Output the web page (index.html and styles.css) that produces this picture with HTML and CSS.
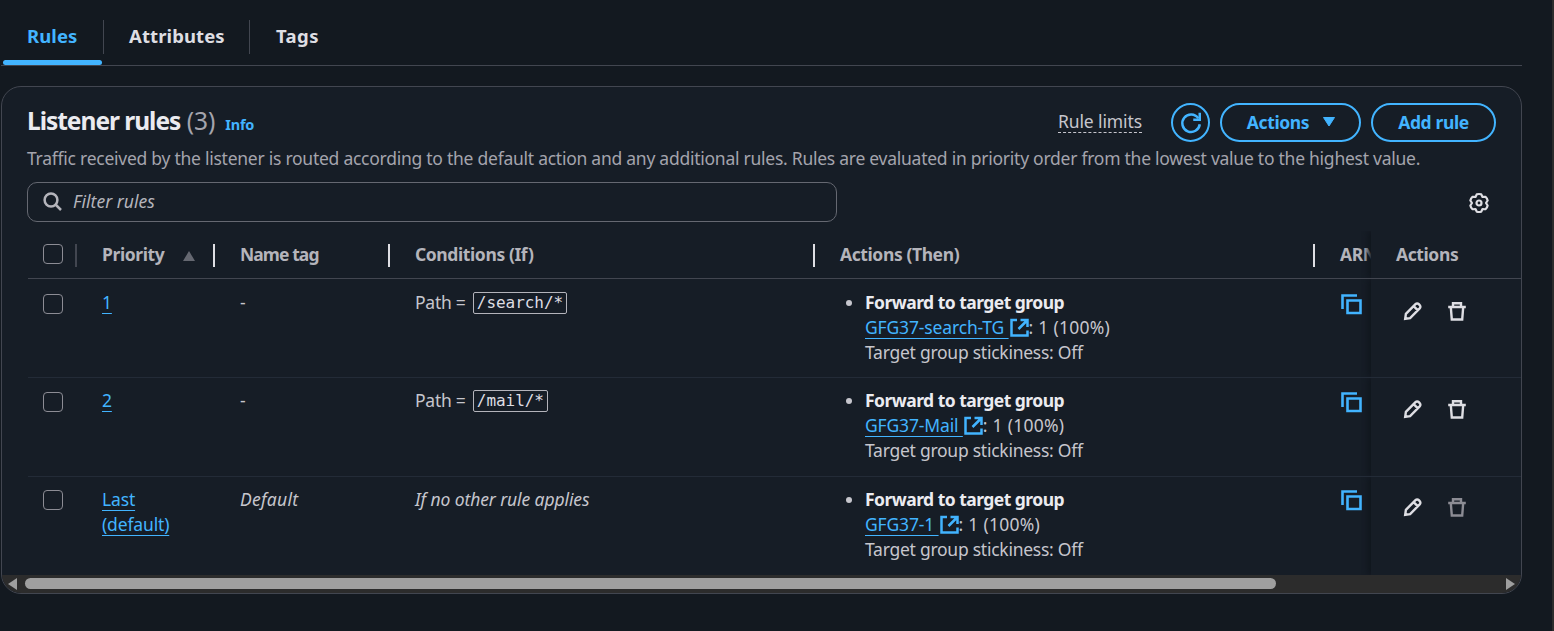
FILE: index.html
```html
<!DOCTYPE html>
<html lang="en">
<head>
<meta charset="utf-8">
<title>Listener rules</title>
<link rel="stylesheet" href="styles.css">
</head>
<body>
<svg class="defs" width="0" height="0">
  <symbol id="i-external" viewBox="0 0 21 21"><path d="M11.500 3h7v7M9.500 12l9-9M18.500 13.500v5h-16V3H8"/></symbol>
  <symbol id="i-copy" viewBox="0 0 21 21"><path d="M16 1.500H1.500V15"/><path d="M6.500 6.500h13v12.500h-13z"/></symbol>
  <symbol id="i-edit" viewBox="0 0 20 20"><path d="M2.200 17.800l.7-4.900L12.500 3.200a2.300 2.300 0 0 1 3.300 0l.9.9a2.300 2.300 0 0 1 0 3.300L7.100 17.100zM10.700 5.200l4.100 4.100"/></symbol>
  <symbol id="i-trash" viewBox="0 0 20 20"><path d="M1.200 6h17.600M6 6V2.200h8V6M3.800 6l1 12.500h10.400l1-12.500"/></symbol>
</svg>
<nav class="tabs">
  <a class="tab active">Rules</a>
  <a class="tab">Attributes</a>
  <a class="tab">Tags</a>
</nav>
<main class="card">
  <header class="head">
    <h2 class="title">Listener rules <span class="count">(3)</span></h2>
    <a class="info">Info</a>
    <span class="limits">Rule limits</span>
    <button class="btn round"><svg width="20" height="20" viewBox="0 0 16 16"><path d="M9.800 5.400H15V-.3"/><path d="M15 9a7 7 0 1 1-1.200-4.800"/></svg></button>
    <button class="btn actions">Actions<svg class="caret" width="14" height="12" viewBox="0 0 14 12"><path d="M1.500 1.500h11L7 10z"/></svg></button>
    <button class="btn add">Add rule</button>
  </header>
  <p class="desc">Traffic received by the listener is routed according to the default action and any additional rules. Rules are evaluated in priority order from the lowest value to the highest value.</p>
  <div class="tools">
    <div class="filter"><svg width="20" height="20" viewBox="0 0 20 20"><circle cx="8" cy="8" r="6.400"/><path d="m12.500 12.500 5.500 5.500"/></svg><em>Filter rules</em></div>
    <svg class="gear" width="22" height="22" viewBox="0 0 22 22"><path d="M8.800 2.300 Q11 1.700 13.200 2.300L14.500 4.900 17.500 4.750Q19.200 6.300 19.650 8.500L18 11 19.650 13.500Q19.200 15.700 17.500 17.250L14.500 17.100 13.200 19.700Q11 20.300 8.800 19.700L7.500 17.100 4.500 17.250Q2.800 15.700 2.350 13.500L4 11 2.350 8.500Q2.800 6.300 4.500 4.750L7.500 4.900z"/><circle cx="11" cy="11" r="2.500"/></svg>
  </div>
  <div class="table">
    <div class="row thead">
      <div class="c pick"><i class="box"></i></div>
      <div class="c">Priority<svg class="sort" width="14" height="12" viewBox="0 0 14 12"><path d="M1 11h12L7 1z"/></svg></div>
      <div class="c tag">Name tag</div>
      <div class="c">Conditions (If)</div>
      <div class="c">Actions (Then)</div>
      <div class="c arn">ARN</div>
      <div class="c sticky">Actions</div>
    </div>
    <div class="row">
      <div class="c pick"><i class="box"></i></div>
      <div class="c"><a class="link">1</a></div>
      <div class="c">-</div>
      <div class="c">Path = <code>/search/*</code></div>
      <div class="c"><ul><li><b>Forward to target group</b><br><a class="link">GFG37-search-TG&nbsp;</a><svg class="ext"><use href="#i-external"/></svg><span class="share">: 1 (100%)</span><br>Target group stickiness: Off</li></ul></div>
      <div class="c arn"><svg class="copy"><use href="#i-copy"/></svg></div>
      <div class="c sticky ops"><svg><use href="#i-edit"/></svg><svg><use href="#i-trash"/></svg></div>
    </div>
    <div class="row second">
      <div class="c pick"><i class="box"></i></div>
      <div class="c"><a class="link">2</a></div>
      <div class="c">-</div>
      <div class="c">Path = <code>/mail/*</code></div>
      <div class="c"><ul><li><b>Forward to target group</b><br><a class="link">GFG37-Mail&nbsp;</a><svg class="ext"><use href="#i-external"/></svg><span class="share">: 1 (100%)</span><br>Target group stickiness: Off</li></ul></div>
      <div class="c arn"><svg class="copy"><use href="#i-copy"/></svg></div>
      <div class="c sticky ops"><svg><use href="#i-edit"/></svg><svg><use href="#i-trash"/></svg></div>
    </div>
    <div class="row last">
      <div class="c pick"><i class="box"></i></div>
      <div class="c"><a class="link">Last<br>(default)</a></div>
      <div class="c"><em class="wide">Default</em></div>
      <div class="c"><em>If no other rule applies</em></div>
      <div class="c"><ul><li><b>Forward to target group</b><br><a class="link">GFG37-1&nbsp;</a><svg class="ext"><use href="#i-external"/></svg><span class="share">: 1 (100%)</span><br>Target group stickiness: Off</li></ul></div>
      <div class="c arn"><svg class="copy"><use href="#i-copy"/></svg></div>
      <div class="c sticky ops"><svg><use href="#i-edit"/></svg><svg class="off"><use href="#i-trash"/></svg></div>
    </div>
  </div>
  <div class="scroll"><i class="arrow left"></i><div class="track"><div class="thumb"></div></div><i class="arrow right"></i></div>
</main>
</body>
</html>
```

FILE: styles.css
```css
* { box-sizing: border-box; }
body {
  margin: 0;
  height: 631px;
  padding: 0 30px 0 1px;
  overflow: hidden;
  background: #131920;
  border-right: 2px solid #2c2c2c;
  color: #c6c6cd;
  font: 17.5px/25px "Noto Sans", "Open Sans", sans-serif;
  letter-spacing: -0.256px;
}
svg { fill: none; stroke: currentColor; stroke-width: 2; flex: none; overflow: visible; }
em { letter-spacing: -0.1px; }
.wide { letter-spacing: 0.3px; }
.defs { position: absolute; }
.tabs { display: flex; height: 66px; border-bottom: 1px solid #424650; padding-left: 2px; }
.tab {
  position: relative;
  height: 65px;
  padding: 23px 24px 0;
  font-size: 18.5px;
  font-weight: 700;
  letter-spacing: 0.1px;
  color: #dedee3;
}
.tab + .tab::before {
  content: "";
  position: absolute;
  left: 0; top: 20px;
  width: 1px; height: 34px;
  background: #424650;
}
.tab.active { width: 100px; color: #42b4ff; }
.tab.active::after {
  content: "";
  position: absolute;
  left: 0; bottom: 0;
  width: 99px; height: 5px;
  border-radius: 5px;
  background: #42b4ff;
}
.tab:nth-child(2) { width: 146px; padding-left: 26px; }
.tab:nth-child(3) { padding-left: 27px; letter-spacing: 0.4px; }
.card {
  width: 1521px;
  height: 508px;
  margin-top: 20px;
  border: 1px solid #424650;
  border-radius: 20px;
  overflow: hidden;
  background: #161d26;
}
.head { display: flex; align-items: center; height: 39px; margin: 16px 25px 0; }
.title { margin: -4px 0 0; font-size: 24.5px; font-weight: 700; letter-spacing: -1.02px; color: #ebebf0; white-space: nowrap; }
.count { font-weight: 400; letter-spacing: 0; color: #a4a4ad; margin-left: 1px; }
.info { margin: 4px 0 0 10px; font-size: 14.5px; font-weight: 700; color: #42b4ff; }
.limits { margin: -2px 29px 0 auto; line-height: 22px; border-bottom: 1px dashed #c6c6cd; letter-spacing: -0.11px; }
.btn {
  display: flex;
  align-items: center;
  justify-content: center;
  height: 39px;
  padding: 0 0 1px;
  border: 2px solid #42b4ff;
  border-radius: 20px;
  background: transparent;
  color: #42b4ff;
  font: inherit;
  font-weight: 700;
  letter-spacing: -0.38px;
}
.round { width: 39px; padding: 1px 0 0 1px; }
.actions { width: 141px; margin-left: 10px; padding-left: 2px; gap: 13px; }
.caret { fill: currentColor; stroke-width: 1; stroke-linejoin: round; }
.add { width: 125px; margin-left: 10px; }
.desc { margin: 4px 25px 11px; white-space: nowrap; color: #a4a4ad; }
.tools { display: flex; align-items: center; justify-content: space-between; margin: 0 31px 0 25px; }
.filter {
  display: flex; align-items: center; gap: 10px;
  width: 810px; height: 40px; padding-left: 15px;
  border: 1px solid #656871; border-radius: 10px;
  color: #b4b4bb;
}
.filter em { margin-top: -2px; letter-spacing: 0.05px; }
.filter svg { stroke-width: 2.5; }
.gear { margin-top: 2px; color: #dedee3; stroke-width: 2.2; stroke-linejoin: round; }
.table { padding-left: 26px; margin-top: 9px; }
.row {
  display: grid;
  grid-template-columns: 49px 138px 175px 425px 500px 56px 150px;
  height: 99px;
  border-bottom: 1px solid #232b37;
}
.c { position: relative; padding: 11px 0 0 25px; white-space: nowrap; }
.second .c { padding-top: 10px; }
.last { height: 98px; border: 0; }
.last .c { padding-top: 10px; }
.thead { height: 48px; border-color: #424650; font-weight: 700; letter-spacing: -0.4px; color: #b4b4bb; }
.tag { letter-spacing: -0.92px; }
.thead .c:not(.sticky)::after {
  content: "";
  position: absolute;
  right: 0; top: 13px;
  width: 2px; height: 23px;
  background: #dedee3;
}
.thead .pick::after { background: #424650 !important; }
.thead .arn::after { display: none; }
.c.pick { padding-left: 15px; }
.box { display: block; width: 20px; height: 20px; margin-top: 4px; border: 1px solid #8c8c94; border-radius: 4px; }
.thead .box { margin-top: 2px; }
.last .box { margin-top: 3px; }
.sort { margin-left: 18px; fill: #656871; stroke: none; vertical-align: -1px; }
.link { color: #42b4ff; text-decoration: underline 1px; text-underline-offset: 4px; letter-spacing: -0.15px; }
code {
  position: relative; top: -1px;
  display: inline-block; padding: 0 3px; margin-left: 3px; line-height: 20px;
  border: 1px solid #b4b4bb; border-radius: 2px; letter-spacing: -0.05px;
  color: #dedee3; font-family: "DejaVu Sans Mono", monospace; font-size: 16px;
}
ul { margin: 0; padding-left: 25px; }
b { color: #ebebf0; letter-spacing: -0.53px; }
.share { letter-spacing: 0.25px; }
.ext { width: 21px; height: 21px; margin: 0 -1px -4px 0; color: #42b4ff; stroke-width: 2.5; }
.arn { overflow: hidden; }
.copy { width: 21px; height: 21px; margin: 4px 0 0 1px; color: #42b4ff; stroke-width: 2.6; }
.last .copy { margin-top: 3px; }
.sticky { background: #161d26; box-shadow: -3px 0 6px #10161d; clip-path: inset(0 0 0 -10px); }
.ops { display: flex; gap: 24px; padding-left: 32px; color: #dedee3; }
.ops svg { width: 20px; height: 20px; margin-top: 11px; stroke-width: 2.4; }
.last .ops svg { margin-top: 10px; }
.ops .off { color: #8c8c94; }
.scroll { display: flex; align-items: flex-start; justify-content: space-between; height: 18px; padding: 3px 6px 0 6px; background: #2c2c2c; }
.track { flex: 1; padding: 0 8px; }
.thumb { width: 1251px; height: 11px; border-radius: 6px; background: #9f9f9f; }
.arrow { border: 6px solid transparent; border-left-width: 0; border-right: 9px solid #9f9f9f; }
.right { transform: scaleX(-1); }
```
